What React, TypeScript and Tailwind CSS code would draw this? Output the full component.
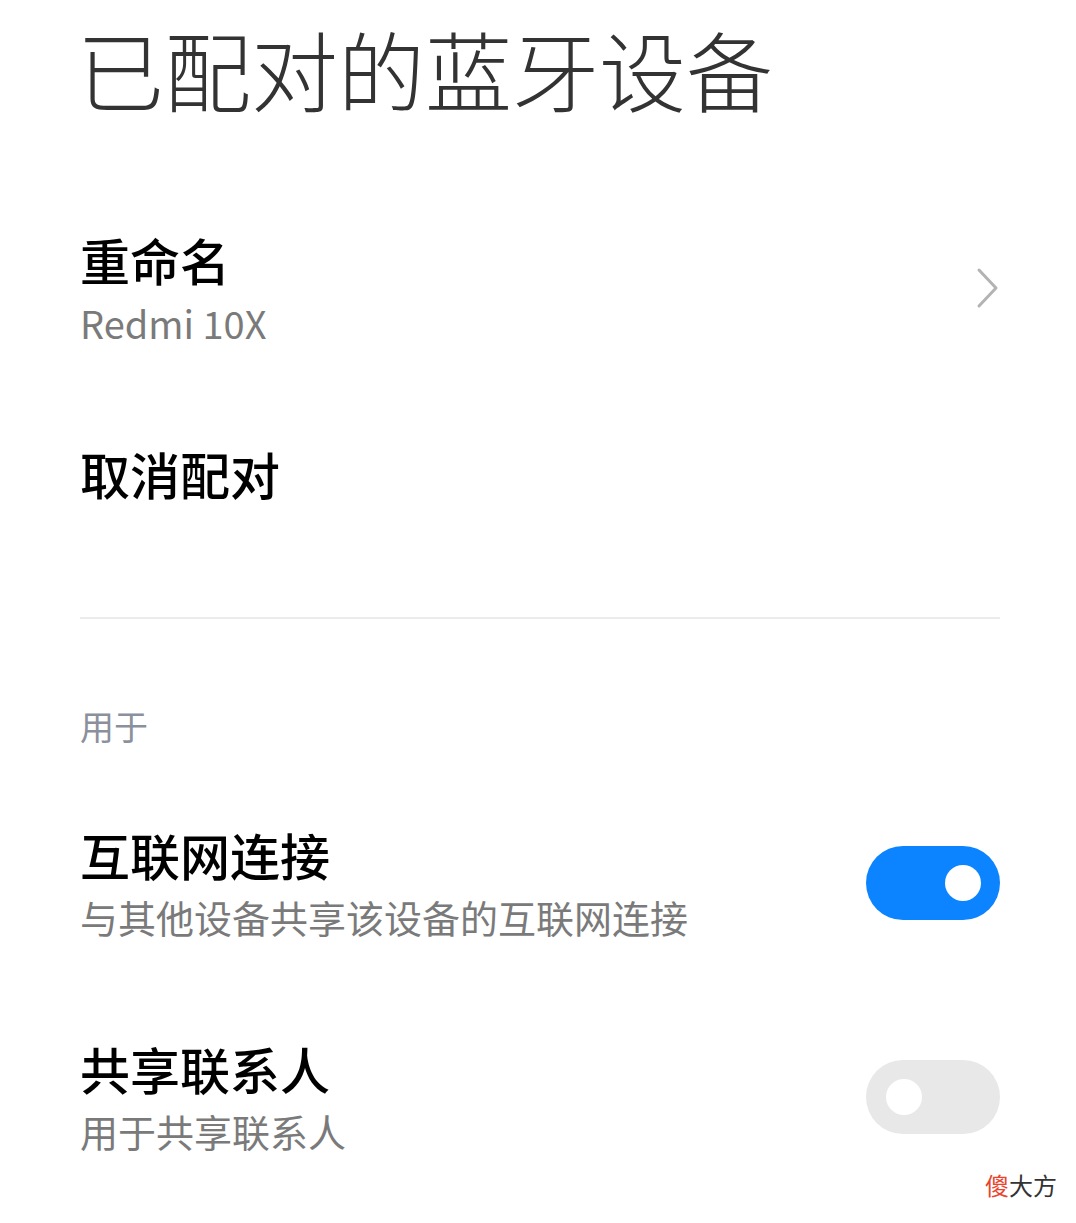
import { useState } from "react";

const font = "font-['Noto_Sans_CJK_SC','Noto_Sans',sans-serif]";

function Toggle({ on, onChange }: { on: boolean; onChange: (v: boolean) => void }) {
    return (
        <button
            onClick={() => onChange(!on)}
            className={`flex h-[74px] w-[134px] shrink-0 items-center rounded-full ${on ? "justify-end bg-[#0d84ff] pr-[19px]" : "justify-start bg-[#e8e8e8] pl-[20px]"}`}>
            <span className="block h-9 w-9 rounded-full bg-white" />
        </button>
    );
}

function SwitchRow({ title, desc, on, onChange }: { title: string; desc: string; on: boolean; onChange: (v: boolean) => void }) {
    return (
        <div className="flex items-center justify-between">
            <div>
                <div className="text-[50px] font-medium leading-none text-black">{title}</div>
                <div className="mt-[19px] text-[38px] leading-none text-[#7a7a7a]">{desc}</div>
            </div>
            <Toggle on={on} onChange={onChange} />
        </div>
    );
}

export default function App() {
    const [shareNet, setShareNet] = useState(true)
    const [shareContacts, setShareContacts] = useState(false)

    return (
        <div className={`relative min-h-[1223px] bg-white px-20 ${font}`}>
            <h1 className="-ml-[3px] pt-[25px] text-[87px] font-light leading-none text-[#333333]">已配对的蓝牙设备</h1>

            {/* rename */}
            <div className="mt-[122px] flex items-center justify-between">
                <div>
                    <div className="text-[50px] font-medium leading-none text-black">重命名</div>
                    <div className="mt-[20px] text-[38px] leading-none text-[#7a7a7a]">Redmi 10X</div>
                </div>
                <svg width="24" height="42" viewBox="0 0 24 42" fill="none" className="-mr-[4px]">
                    <path d="M3 3 L20 21 L3 39" stroke="#b3b3b3" strokeWidth="3" strokeLinecap="round" strokeLinejoin="round" />
                </svg>
            </div>

            <div className="mt-[106px] text-[50px] font-medium leading-none text-black">取消配对</div>

            <div className="mt-[119px] h-[2px] w-[920px] bg-[#ececec]" />

            <div className="mt-[90px] text-[34px] leading-none text-[#8a909c]">用于</div>

            <div className="mt-[86px] w-[920px]">
                <SwitchRow title="互联网连接" desc="与其他设备共享该设备的互联网连接" on={shareNet} onChange={setShareNet} />
            </div>
            <div className="mt-[107px] w-[920px]">
                <SwitchRow title="共享联系人" desc="用于共享联系人" on={shareContacts} onChange={setShareContacts} />
            </div>

            <div className="absolute bottom-[26px] right-[19px] text-[24px] leading-none">
                <span className="text-[#e8452c]">傻</span>
                <span className="text-[#333333]">大方</span>
            </div>
        </div>
    );
}
